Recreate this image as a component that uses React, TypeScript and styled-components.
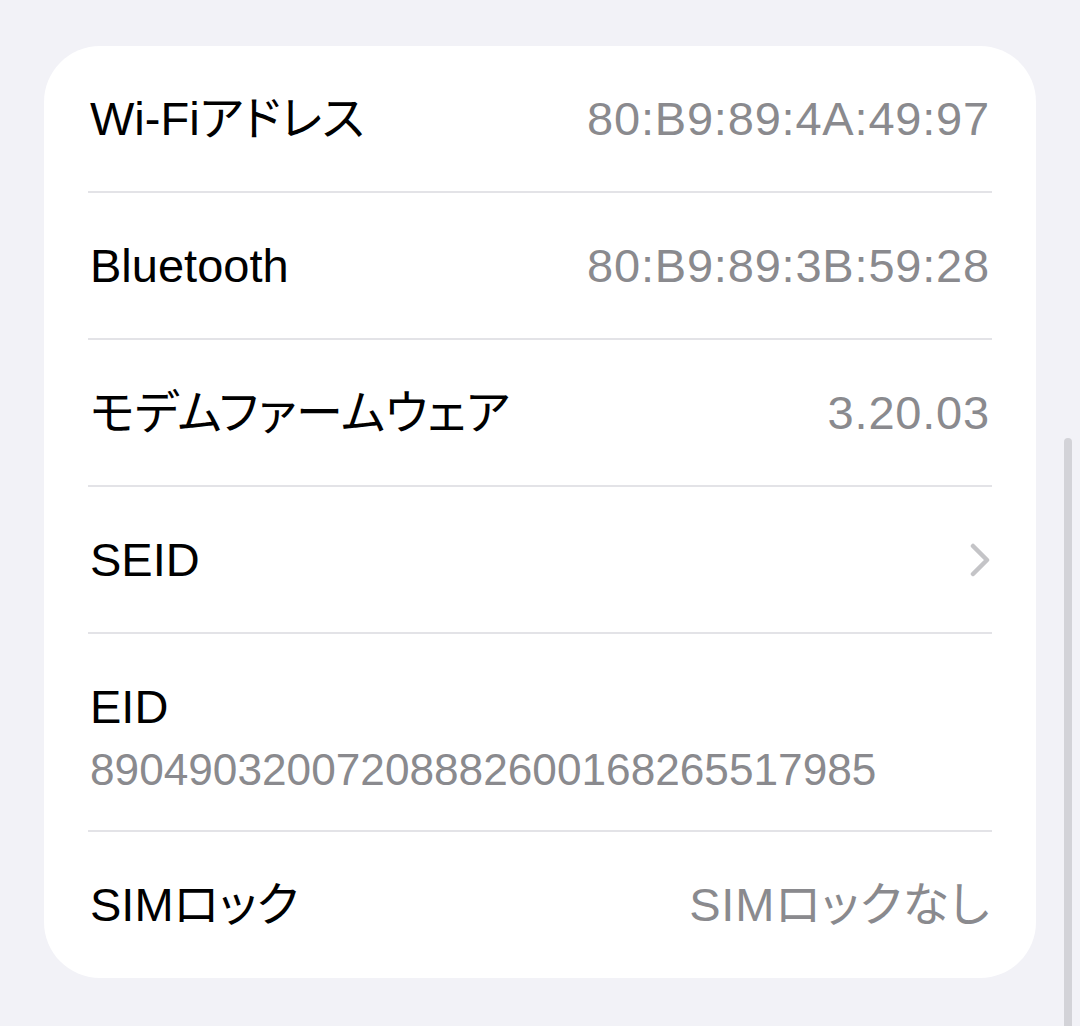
import React from "react";
import styled, { createGlobalStyle } from "styled-components";

interface InfoItem {
  label: string;
  value?: string;
  stacked?: boolean;
  link?: boolean;
}

const items: InfoItem[] = [
  { label: "Wi-Fiアドレス", value: "80:B9:89:4A:49:97" },
  { label: "Bluetooth", value: "80:B9:89:3B:59:28" },
  { label: "モデムファームウェア", value: "3.20.03" },
  { label: "SEID", link: true },
  { label: "EID", value: "89049032007208882600168265517985", stacked: true },
  { label: "SIMロック", value: "SIMロックなし" },
];

export default function App() {
  return (
    <>
      <GlobalStyle />
      <Page>
        <Card>
          {items.map((item, i) =>
            item.stacked ? (
              <StackedRow key={item.label}>
                <Label>{item.label}</Label>
                <SubValue>{item.value}</SubValue>
              </StackedRow>
            ) : (
              <Row key={item.label} $last={i === items.length - 1}>
                <Label>{item.label}</Label>
                {item.link ? (
                  <Chevron width="20" height="34" viewBox="0 0 20 34">
                    <polyline points="3,3 17,17 3,31" />
                  </Chevron>
                ) : (
                  <Value>{item.value}</Value>
                )}
              </Row>
            )
          )}
        </Card>
        <ScrollThumb />
      </Page>
    </>
  );
}

const GlobalStyle = createGlobalStyle`
  html, body {
    margin: 0;
    padding: 0;
    background: #f2f2f7;
  }
  body {
    font-family: "Liberation Sans", "Noto Sans CJK JP", sans-serif;
    font-feature-settings: "palt" 1;
    -webkit-font-smoothing: antialiased;
  }
`;

const Page = styled.div`
  min-height: 1026px;
  padding: 46px 44px 0 44px;
  box-sizing: border-box;
`;

const Card = styled.div`
  width: 992px;
  background: #ffffff;
  border-radius: 56px;
  padding: 0 44px;
  box-sizing: border-box;
  overflow: hidden;
`;

const Row = styled.div<{ $last?: boolean }>`
  display: flex;
  align-items: center;
  justify-content: space-between;
  height: ${(p) => (p.$last ? 146 : 145)}px;
  border-bottom: ${(p) => (p.$last ? "none" : "2px solid #e3e3e7")};
`;

const StackedRow = styled.div`
  display: flex;
  flex-direction: column;
  justify-content: flex-start;
  gap: 9px;
  height: 198px;
  padding-top: 45px;
  box-sizing: border-box;
  border-bottom: 2px solid #e3e3e7;
`;

const Label = styled.span`
  font-size: 47px;
  line-height: 56px;
  color: #000000;
  padding-left: 2px;
`;

const Value = styled.span`
  font-size: 47px;
  line-height: 56px;
  letter-spacing: 0.8px;
  color: #8a8a8e;
  padding-right: 2px;
`;

const SubValue = styled.span`
  font-size: 44.2px;
  line-height: 52px;
  color: #8a8a8e;
  padding-left: 2px;
`;

const Chevron = styled.svg`
  margin-right: 2px;
  fill: none;
  stroke: #c4c4c7;
  stroke-width: 4.5;
  stroke-linecap: round;
  stroke-linejoin: round;
`;

const ScrollThumb = styled.div`
  position: fixed;
  left: 1064px;
  top: 438px;
  width: 8px;
  height: 620px;
  border-radius: 4px;
  background: #d3d3d8;
`;
